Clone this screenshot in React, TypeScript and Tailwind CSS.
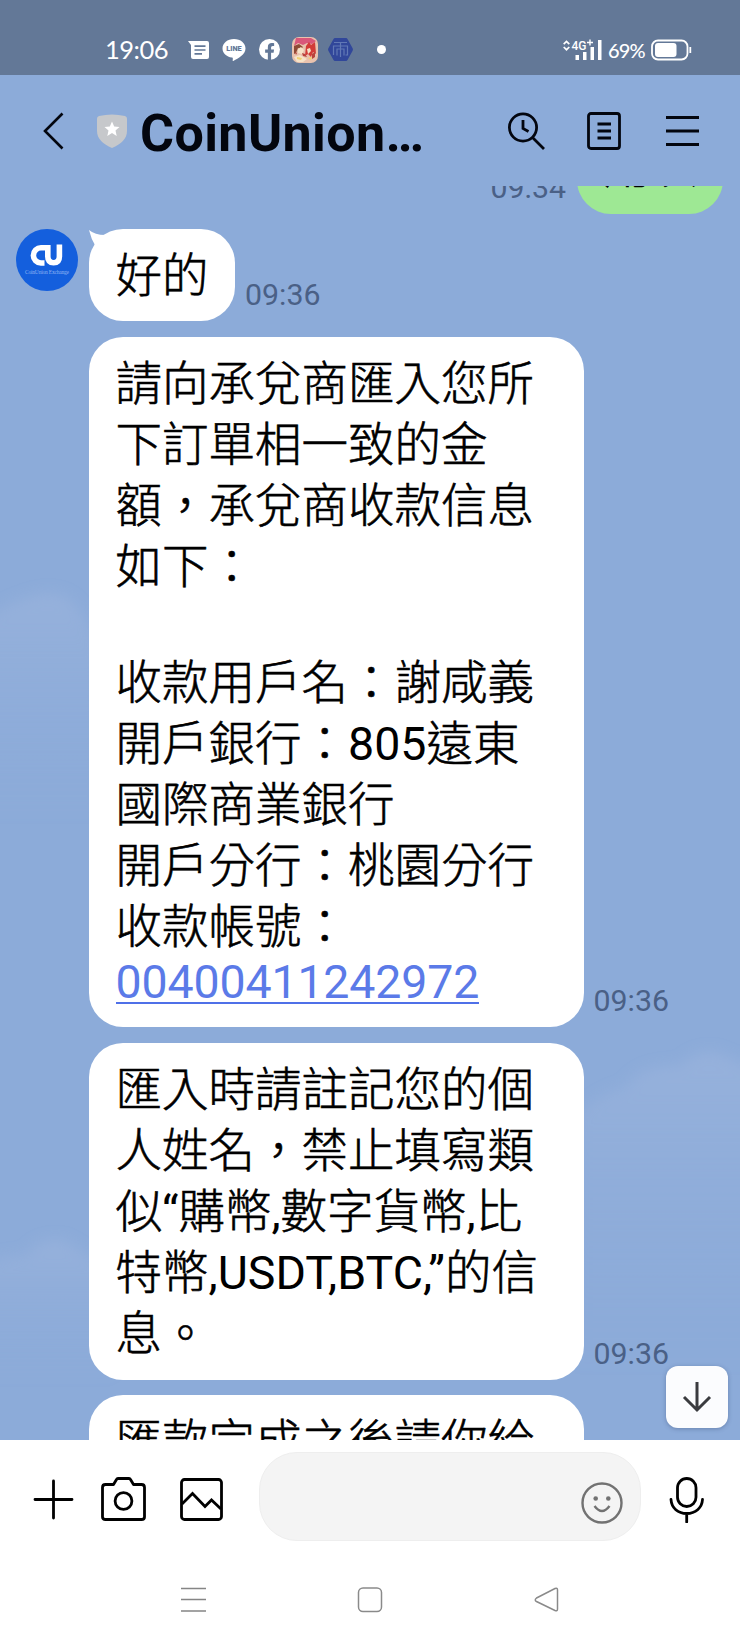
import React from "react";

const StatusBar = () => (
  <div className="flex h-[75px] shrink-0 items-center bg-[#637897] pt-6 pl-[105px] text-white">
    <span className="w-[64px] whitespace-nowrap font-['Lato'] text-[25.5px] leading-[25px] tracking-[-0.5px]">19:06</span>
    <svg className="ml-[19px] h-[18px] w-[21px]" viewBox="0 0 21 18">
      <path fill="#fff" d="M0 0h19a2 2 0 0 1 2 2v14a2 2 0 0 1-2 2H5a2 2 0 0 1-2-2V4z" />
      <path stroke="#637897" strokeWidth="1.7" d="M6.5 5.2h11M6.5 9h11M6.5 12.8h7.5" />
    </svg>
    <svg className="ml-[13px] h-[22px] w-[24px]" viewBox="0 0 24 22">
      <path fill="#fff" d="M12 0C5.4 0 .5 4.200.5 9.500c0 4.700 4 8.300 9.500 9.100 1 .2.9.8.7 2.600-.1.700.3.900 1 .5C16 19.500 23.500 15.500 23.500 9.500 23.500 4.200 18.600 0 12 0z" />
      <text x="12" y="12.300" textAnchor="middle" fontSize="7.300" fontWeight="900" fontFamily="Roboto, sans-serif" fill="#637897">LINE</text>
    </svg>
    <svg className="ml-[13px] h-[21px] w-[21px]" viewBox="0 0 24 24">
      <circle cx="12" cy="12" r="12" fill="#fff" />
      <path fill="#637897" d="M10.100 24v-8.400H7v-3.500h3.100V9.400c0-3 1.800-4.700 4.500-4.700 1.300 0 2.700.2 2.700.2v3h-1.500c-1.500 0-2 .9-2 1.900v2.300h3.400l-.5 3.500h-2.900V24z" />
    </svg>
    <svg className="ml-[12px] h-[26px] w-[26px]" viewBox="0 0 26 26">
      <rect width="26" height="26" rx="7" fill="#e9c2ae" />
      <path fill="#d9577a" d="M4 1h15l5 3-4 3-5-1-4 2-5-2-4 3z" />
      <path fill="#d23b38" d="M14 9l3-4 2 3 4-3 1 12-3-2-2 5-3-3-3 2z" />
      <path fill="#8e4a35" d="M2 9l5-2 4 3-2 2-3-1-2 5-2 1z" />
      <path fill="#f6e3c8" d="M6 12l3-2 3 3-2 4-4-1zM15 12l3-1 1 3-3 3zM2 20l6-2 7 4-4 3H5z" />
      <path fill="#b8433c" d="M10 16l3 1 2 3-4-1zM20 17l3-2v5l-3 2zM3 15l2 1-1 2z" />
      <path fill="#f3d06f" d="M5 20l5 1-1 2-4-1zM16 21l4-1-1 3z" />
    </svg>
    <svg className="ml-[10px] h-[23px] w-[25px]" viewBox="0 0 25 23">
      <path fill="#31479a" d="M7 0h11a2 2 0 0 1 1.500 1l5 9a3 3 0 0 1 0 3l-5 9a2 2 0 0 1-1.500 1H7a2 2 0 0 1-1.500-1l-5-9a3 3 0 0 1 0-3l5-9A2 2 0 0 1 7 0z" />
      <path fill="none" stroke="#6178b5" strokeWidth="1.200" d="M6 4.500h13M12.500 4.500V19M5.500 17V8h14v9h-2M9 17.500V11h7v6.500" />
    </svg>
    <span className="ml-[24px] size-[9px] rounded-full bg-white" />
    <svg className="ml-[177px] h-[22px] w-[39px]" viewBox="0 0 39 22">
      <path fill="none" stroke="#fff" strokeWidth="1.700" d="M.7 5.200L3.500 2.500l2.800 2.700M.7 8L3.500 10.700 6.300 8" />
      <text x="8.500" y="11" fontSize="13" fontWeight="500" fontFamily="Roboto, sans-serif" fill="#fff" textLength="15" lengthAdjust="spacingAndGlyphs">4G</text>
      <path stroke="#fff" strokeWidth="1.400" d="M24 3.500h6M27 .5v6" />
      <path fill="#fff" d="M12.500 16h3.500v5h-3.500zM20 13h3.500v8H20zM27.500 8H31v13h-3.500zM35 1h3.500v20H35z" />
    </svg>
    <span className="ml-[6px] w-[38px] whitespace-nowrap font-['Lato'] text-[20px] font-medium leading-5 tracking-[-0.9px]">69%</span>
    <svg className="ml-[5px] h-[22px] w-[41px]" viewBox="0 0 41 22">
      <rect x="1" y="1.500" width="35.500" height="19" rx="6" fill="none" stroke="#fff" strokeWidth="1.800" />
      <rect x="4" y="4" width="21.500" height="14" rx="3" fill="#fff" />
      <path stroke="#fff" strokeWidth="1.800" d="M39.300 8v6" />
    </svg>
  </div>
);

const Header = () => (
  <header className="flex h-[111px] shrink-0 items-start pl-[43px] text-[#03060f]">
    <svg className="mt-[37px] h-[38px] w-[21px]" viewBox="0 0 21 38" fill="none" stroke="currentColor" strokeWidth="2.600">
      <path d="M19.500 1.500L2 19l17.500 17.500" />
    </svg>
    <svg className="mt-[39px] ml-[33px] h-[34px] w-[30px]" viewBox="0 0 30 34">
      <path fill="#c6c8cb" d="M2 2Q15-1 28 2q2 .5 2 2.500V17c0 8-6 13-15 17C6 30 0 25 0 17V4.500Q0 2.500 2 2z" />
      <path fill="#fff" d="M15 7.500l2.200 5 5.300.5-4 3.600 1.200 5.300-4.700-2.800-4.700 2.800 1.200-5.300-4-3.600 5.300-.5z" />
    </svg>
    <h1 className="mt-[29px] ml-[13px] w-[300px] whitespace-nowrap font-['Roboto'] text-[52px] font-bold leading-[60px] tracking-[0.400px]">CoinUnion…</h1>
    <svg className="mt-[36px] ml-[67.500px] h-[40px] w-[38px]" viewBox="0 0 38 40" fill="none" stroke="currentColor" strokeWidth="2.800">
      <circle cx="15" cy="16.500" r="13.600" />
      <path d="M15 9v8.500l5.500 3M24.500 26.500L36 38" />
    </svg>
    <svg className="mt-[37px] ml-[41px] h-[38px] w-[34px]" viewBox="0 0 34 38" fill="none" stroke="currentColor" strokeWidth="2.800">
      <rect x="1.500" y="1.500" width="31" height="35" rx="2.500" />
      <path d="M10.500 12H24M10.500 19H24M10.500 26H24" />
    </svg>
    <svg className="mt-[40px] ml-[45px] h-[32px] w-[33px]" viewBox="0 0 33 32" stroke="currentColor" strokeWidth="2.800">
      <path d="M0 2.500h33M0 16h33M0 29.500h33" />
    </svg>
  </header>
);

const Time = ({ children }: { children: string }) => (
  <span className="mb-[9px] ml-[10px] whitespace-nowrap font-['Roboto'] text-[30.300px] font-normal leading-[34px] text-[#4a6086]">{children}</span>
);

const Mixed = ({ text }: { text: string }) => (
  <>
    {text.split(/([\x21-\x7e“”]+)/).map((part, i) =>
      i % 2 === 1 ? (
        <span key={i} className="font-normal">{part}</span>
      ) : (
        <span key={i} className="[-webkit-text-stroke:0.6px_black]">{part}</span>
      )
    )}
  </>
);

const Lines = ({ lines }: { lines: string[] }) => (
  <>
    {lines.map((line, i) =>
      line === "" ? (
        <div key={i} className="h-[54.500px]" />
      ) : (
        <div key={i} className="h-[61px] whitespace-nowrap leading-[61px]">
          <Mixed text={line} />
        </div>
      )
    )}
  </>
);

const Bubble = ({ children }: { children: React.ReactNode }) => (
  <div className="w-[495px] shrink-0 rounded-[34px] bg-white px-[27px] pt-[17px] pb-[15px] text-black">{children}</div>
);

const instructions = [
  "請向承兌商匯入您所",
  "下訂單相一致的金",
  "額，承兌商收款信息",
  "如下：",
  "",
  "收款用戶名：謝咸義",
  "開戶銀行：805遠東",
  "國際商業銀行",
  "開戶分行：桃園分行",
  "收款帳號：",
];

const note = [
  "匯入時請註記您的個",
  "人姓名，禁止填寫類",
  "似“購幣,數字貨幣,比",
  "特幣,USDT,BTC,”的信",
  "息。",
];

const Clouds = () => (
  <svg className="absolute inset-0 h-full w-full" viewBox="0 0 740 1254" preserveAspectRatio="none">
    <defs>
      <filter id="soft" x="-20%" y="-20%" width="140%" height="140%">
        <feGaussianBlur stdDeviation="7" />
      </filter>
      <linearGradient id="fade" x1="0" y1="0" x2="0" y2="1">
        <stop offset="0" stopColor="#a0b7de" stopOpacity=".5" />
        <stop offset="1" stopColor="#8cabd9" stopOpacity="0" />
      </linearGradient>
    </defs>
    <g fill="url(#fade)" filter="url(#soft)">
      <path d="M-20 435Q10 415 40 408q30-5 45 25l20 40v160H-20z" />
      <path d="M575 930q30-26 50-28 15-24 55-22 15-16 35-14l50 20v300H575z" />
      <path d="M-20 1080q25-12 45-10 15-20 40-15l50 30v110H-20z" />
    </g>
  </svg>
);

const Chat = () => (
  <main className="relative h-[1254px] shrink-0 overflow-hidden font-['Roboto','Noto_Sans_CJK_TC',sans-serif] text-[46.500px] font-light">
    <Clouds />
    <div className="relative flex h-full flex-col">
      <div className="-mt-[65px] flex h-[92.500px] shrink-0 items-end justify-end pr-[17px]">
        <Time>09:34</Time>
        <div className="ml-[11px] h-[92.500px] w-[146px] rounded-[34px] bg-[#9ee894] px-[27px] pt-[16px] text-black">
          <Lines lines={["用以"]} />
        </div>
      </div>
      <div className="mt-[15.500px] flex h-[92px] shrink-0 items-end pl-[16px]">
        <svg className="h-[62px] w-[62px] self-start" viewBox="0 0 62 62">
          <circle cx="31" cy="31" r="31" fill="#145fdd" />
          <path fill="none" stroke="#fff" strokeWidth="5.600" d="M30 18.800H25a7.600 7.600 0 0 0 0 15.200h3.500M31.800 16v11.500q0 6.200 5.800 6.200t5.800-6.200V15.500" />
          <text x="31" y="44.500" textAnchor="middle" fontSize="5.500" fontFamily="Liberation Serif, serif" fill="#8fb3f2" textLength="44">CoinUnion Exchange</text>
        </svg>
        <div className="relative ml-[10.500px] h-[92px] w-[146.500px] rounded-[34px] bg-white px-[27px] pt-[17px] text-black">
          <svg className="absolute top-0 left-0 h-[26px] w-[26px]" viewBox="0 0 26 26">
            <path fill="#fff" d="M0 1q6 5 16 5L7 18Q2 10 0 1z" />
          </svg>
          <div className="relative">
            <Lines lines={["好的"]} />
          </div>
        </div>
        <Time>09:36</Time>
      </div>
      <div className="mt-[16px] flex shrink-0 items-end pl-[88.500px]">
        <Bubble>
          <Lines lines={instructions} />
          <div className="flex h-[54.500px] items-start">
            <a className="h-[46px] border-b-2 border-[#4f70e8] font-normal leading-[49px] tracking-[-0.150px] text-[#5b7ae8]">00400411242972</a>
          </div>
        </Bubble>
        <Time>09:36</Time>
      </div>
      <div className="mt-[16px] flex shrink-0 items-end pl-[88.500px]">
        <Bubble><Lines lines={note} /></Bubble>
        <Time>09:36</Time>
      </div>
      <div className="mt-[15px] flex shrink-0 pl-[88.500px]">
        <Bubble><Lines lines={["匯款完成之後請你給"]} /></Bubble>
      </div>
    </div>
    <button className="absolute right-[12.500px] bottom-[12px] flex size-[62px] items-center justify-center rounded-[12px] bg-[#fbfcfe] shadow-[0_1px_4px_rgba(40,60,100,0.35)]">
      <svg className="h-[32px] w-[30px]" viewBox="0 0 30 32" fill="none" stroke="#3a3b3f" strokeWidth="3">
        <path d="M15 1v27M2 16l13 13 13-13" />
      </svg>
    </button>
  </main>
);

const Composer = () => (
  <div className="flex h-[124px] shrink-0 items-start pl-[33px]">
    <svg className="mt-[39px] h-[41px] w-[41px]" viewBox="0 0 41 41" stroke="#000" strokeWidth="2.800" strokeLinecap="round">
      <path d="M20.500 2v37M2 20.500h37" />
    </svg>
    <svg className="mt-[37px] ml-[27px] h-[44px] w-[45px]" viewBox="0 0 45 44" fill="none" stroke="#000" strokeWidth="2.800" strokeLinejoin="round">
      <path d="M4.500 7.500H12.500l3-5q.5-1 1.500-1h11q1 0 1.500 1l3 5h8q3 0 3 3V40q0 2.500-3 2.500h-36q-3 0-3-2.500V10.500q0-3 3-3z" />
      <circle cx="22.500" cy="24" r="8.400" />
    </svg>
    <svg className="mt-[38px] ml-[34px] h-[43px] w-[43px]" viewBox="0 0 43 43" fill="none" stroke="#000" strokeWidth="2.800">
      <rect x="1.500" y="1.500" width="40" height="40" rx="3" />
      <path d="M2 26l10.500-10.500L25 28.500l6.500-6.500L41 31" />
    </svg>
    <div className="mt-[12px] ml-[36px] flex h-[89px] w-[382px] items-start justify-end rounded-[38px] border border-[#eeeeee] bg-[#f4f4f4] pr-[17px]">
      <svg className="mt-[29px] h-[42px] w-[42px]" viewBox="0 0 42 42" fill="none" stroke="#727272" strokeWidth="2.400">
        <circle cx="21" cy="21" r="19.500" />
        <circle cx="14.700" cy="16.500" r="2.300" fill="#727272" stroke="none" />
        <circle cx="27.300" cy="16.500" r="2.300" fill="#727272" stroke="none" />
        <path d="M13.500 24q7.500 10 15 0" />
      </svg>
    </div>
    <svg className="mt-[37px] ml-[28px] h-[46px] w-[36px]" viewBox="0 0 36 46" fill="none" stroke="#000" strokeWidth="2.800">
      <rect x="8.500" y="1.500" width="18.500" height="28" rx="9.200" />
      <path strokeLinecap="round" d="M2 22.500C2.500 31 9 36.500 17.700 36.500S33 31 33.500 22.500M17.700 36.500V45" />
    </svg>
  </div>
);

const NavBar = () => (
  <nav className="flex grow items-start pt-[22px] pl-[181px]">
    <svg className="h-[27px] w-[25px]" viewBox="0 0 25 27" stroke="#858585" strokeWidth="1.700">
      <path d="M0 2.500h25M0 13.500h25M0 25h25" />
    </svg>
    <svg className="ml-[151px] h-[27px] w-[26px]" viewBox="0 0 26 27" fill="none" stroke="#8a8a8a" strokeWidth="1.500">
      <rect x="1.500" y="2" width="23" height="23.500" rx="4.500" />
    </svg>
    <svg className="ml-[151px] h-[27px] w-[26px]" viewBox="0 0 26 27" fill="none" stroke="#8a8a8a" strokeWidth="1.500">
      <path d="M2.500 12L21 2.500q2.500-1 2.500 1.500v19q0 2.500-2.500 1.500L2.500 15.500q-2.500-1.500 0-3.500z" />
    </svg>
  </nav>
);

export default function App() {
  return (
    <div lang="zh-TW" className="flex h-[1645px] w-[740px] flex-col overflow-hidden bg-[#8cabd9]">
      <StatusBar />
      <Header />
      <Chat />
      <div className="flex grow flex-col bg-white">
        <Composer />
        <NavBar />
      </div>
    </div>
  );
}
